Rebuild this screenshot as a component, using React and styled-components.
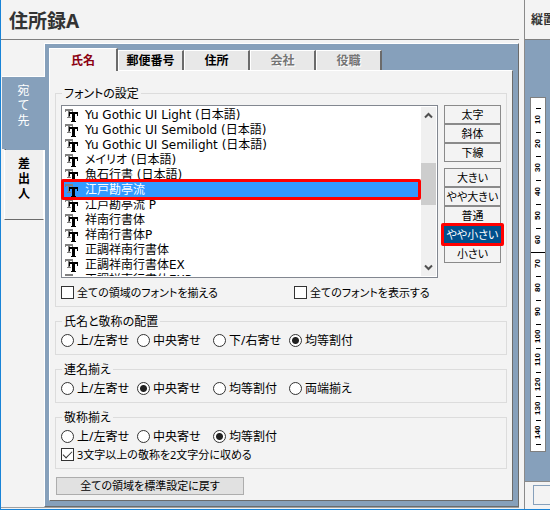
import { useState } from "react";
import styled, { createGlobalStyle, css } from "styled-components";

const FONTS = [
  "Yu Gothic UI Light (日本語)",
  "Yu Gothic UI Semibold (日本語)",
  "Yu Gothic UI Semilight (日本語)",
  "メイリオ (日本語)",
  "魚石行書 (日本語)",
  "江戸勘亭流",
  "江戸勘亭流 P",
  "祥南行書体",
  "祥南行書体P",
  "正調祥南行書体",
  "正調祥南行書体EX",
  "正調祥南行書体EXP",
];

const TABS = [
  { label: "氏名" },
  { label: "郵便番号" },
  { label: "住所" },
  { label: "会社", disabled: true },
  { label: "役職", disabled: true },
];

const STYLES = ["太字", "斜体", "下線"];
const SIZES = ["大きい", "やや大きい", "普通", "やや小さい", "小さい"];
const MARKS = [10, 20, 30, 40, 50, 60, 70, 80, 90, 100, 110, 120, 130, 140];

const TrueTypeIcon = () => (
  <svg width="13" height="13" viewBox="0 0 13 13" shapeRendering="crispEdges" aria-hidden="true">
    <path fill="#808080" d="M0 0h8v3h-1v-1h-2v6h1v1h-4v-1h1v-6h-2v1h-1z" />
    <path fill="#000" d="M4 3h9v4h-1v-2h-2v7h1v1h-5v-1h1v-7h-2v2h-1z" />
  </svg>
);

const RadioGroup = ({ legend, name, options, initial, children }) => {
  const [value, setValue] = useState(initial);
  return (
    <Group>
      <Legend>{legend}</Legend>
      <RadioRow>
        {options.map((option) => (
          <Label key={option}>
            <Radio name={name} checked={value === option} onChange={() => setValue(option)} />
            {option}
          </Label>
        ))}
      </RadioRow>
      {children}
    </Group>
  );
};

const Ruler = () => (
  <RulerBox>
    <Tick />
    {MARKS.map((mark) => (
      <Mark key={mark}>
        <MarkLabel>{mark}</MarkLabel>
        <Tick $fold={mark === 60} />
      </Mark>
    ))}
  </RulerBox>
);

const App = () => {
  const [tab, setTab] = useState("氏名");
  const [side, setSide] = useState("宛て先");
  const [font, setFont] = useState("江戸勘亭流");
  const [size, setSize] = useState("やや小さい");

  return (
    <Window>
      <GlobalStyle />
      <MainPane>
        <Header>
          <Title>住所録A</Title>
        </Header>
        <Body>
          <SideTabs role="tablist">
            {["宛て先", "差出人"].map((label) => (
              <SideTab key={label} role="tab" $active={side === label} aria-selected={side === label} onClick={() => setSide(label)}>
                <SideLabel>{label}</SideLabel>
              </SideTab>
            ))}
          </SideTabs>
          <Frame>
            <TabRow role="tablist">
              {TABS.map(({ label, disabled }) => (
                <Tab key={label} role="tab" disabled={disabled} $active={tab === label} aria-selected={tab === label} onClick={() => setTab(label)}>
                  {label}
                </Tab>
              ))}
            </TabRow>
            <Page>
              <Group>
                <Legend>フォントの設定</Legend>
                <FontRow>
                  <ListBox>
                    <List role="listbox" aria-label="フォントの設定">
                      {FONTS.map((name) => (
                        <Item key={name} role="option" aria-selected={font === name} $selected={font === name} onClick={() => setFont(name)}>
                          <TrueTypeIcon />
                          {name}
                        </Item>
                      ))}
                    </List>
                    <ScrollBar>
                      <ScrollButton aria-label="上へ">
                        <svg width="9" height="7" viewBox="0 0 9 7">
                          <path d="M1 5.5l3.500-3.500 3.500 3.500" fill="none" stroke="#505050" strokeWidth="2" />
                        </svg>
                      </ScrollButton>
                      <Thumb />
                      <ScrollButton aria-label="下へ">
                        <svg width="9" height="7" viewBox="0 0 9 7">
                          <path d="M1 1.500l3.500 3.500 3.500-3.500" fill="none" stroke="#505050" strokeWidth="2" />
                        </svg>
                      </ScrollButton>
                    </ScrollBar>
                    <ListCallout />
                  </ListBox>
                  <ButtonColumn>
                    <ButtonStack>
                      {STYLES.map((label) => (
                        <OptionButton key={label}>{label}</OptionButton>
                      ))}
                    </ButtonStack>
                    <ButtonStack>
                      {SIZES.map((label) => (
                        <OptionButton key={label} $active={size === label} onClick={() => setSize(label)}>
                          {label}
                          {size === label && <ButtonCallout />}
                        </OptionButton>
                      ))}
                    </ButtonStack>
                  </ButtonColumn>
                </FontRow>
                <CheckRow>
                  <CheckLabel>
                    <CheckBox />
                    全ての領域のフォントを揃える
                  </CheckLabel>
                  <CheckLabel>
                    <CheckBox />
                    全てのフォントを表示する
                  </CheckLabel>
                </CheckRow>
              </Group>
              <RadioGroup
                legend="氏名と敬称の配置"
                name="layout"
                options={["上/左寄せ", "中央寄せ", "下/右寄せ", "均等割付"]}
                initial="均等割付"
              />
              <RadioGroup
                legend="連名揃え"
                name="joint"
                options={["上/左寄せ", "中央寄せ", "均等割付", "両端揃え"]}
                initial="中央寄せ"
              />
              <RadioGroup
                legend="敬称揃え"
                name="honorific"
                options={["上/左寄せ", "中央寄せ", "均等割付"]}
                initial="均等割付"
              >
                <CheckLabel>
                  <CheckBox defaultChecked />
                  3文字以上の敬称を2文字分に収める
                </CheckLabel>
              </RadioGroup>
              <ResetButton>全ての領域を標準設定に戻す</ResetButton>
            </Page>
          </Frame>
        </Body>
      </MainPane>
      <PreviewPane>
        <Header>
          <PreviewTitle>縦置き</PreviewTitle>
        </Header>
        <Canvas>
          <Ruler />
        </Canvas>
        <PreviewFooter>
          <FooterButton aria-label="表示" />
        </PreviewFooter>
      </PreviewPane>
    </Window>
  );
};

export default App;

const GlobalStyle = createGlobalStyle`
  *, *::before, *::after {
    box-sizing: border-box;
  }
  body {
    margin: 0;
    background-color: #f3f3f3;
    color: #000;
    font: 12px/15px "Noto Sans", "Noto Sans CJK JP", sans-serif;
    font-feature-settings: "palt";
  }
  button, input {
    margin: 0;
    padding: 0;
    font: inherit;
    font-feature-settings: inherit;
    color: inherit;
  }
`

const Window = styled.div`
  display: flex;
  min-height: 100vh;
  border-left: 1px solid #1883d7;
  border-bottom: 1px solid #1883d7;
  overflow: hidden;
`
const MainPane = styled.main`
  flex: 1;
  min-width: 0;
  display: flex;
  flex-direction: column;
  padding-bottom: 1px;
`
const Header = styled.header`
  height: 40px;
  flex: none;
  display: flex;
  align-items: center;
  border-bottom: 1px solid #7f7f7f;
  color: #333;
  white-space: nowrap;
`
const Title = styled.h1`
  margin: 0;
  padding: 2px 0 0 8px;
  font-size: 19px;
  line-height: 24px;
  font-weight: bold;
`
const Body = styled.div`
  flex: 1;
  display: flex;
  padding-top: 3px;
  border-bottom: 1px solid #a0a0a0;
`
const SideTabs = styled.div`
  width: 43px;
  flex: none;
  display: flex;
  flex-direction: column;
  padding-top: 33px;
`
const SideTab = styled.button`
  width: 40px;
  height: 71px;
  margin-left: 3px;
  padding-top: 6px;
  display: flex;
  justify-content: center;
  align-items: flex-start;
  border: 1px solid;
  border-color: #6b6b6b #fff #6b6b6b #fff;
  background-color: #f0f0f0;
  font-weight: bold;
  ${({ $active }) => $active && css`
    width: 43px;
    height: 73px;
    margin-left: 1px;
    position: relative;
    border-width: 1px 0 0;
    border-color: #fff;
    background-color: #86a0bb;
    color: #fff;
    box-shadow: 4px 1px #86a0bb;
    font-weight: normal;
  `}
`
const SideLabel = styled.span`
  width: 12px;
  line-height: 15px;
  word-break: break-all;
  font-feature-settings: normal;
`
const Frame = styled.div`
  flex: 1;
  min-width: 0;
  display: flex;
  flex-direction: column;
  padding: 4px 5px 5px 4px;
  border: 1px solid;
  border-color: #fff #6b6b6b #6b6b6b #fff;
  background-color: #86a0bb;
`
const TabRow = styled.div`
  display: flex;
  align-items: flex-end;
  height: 23px;
`
const Tab = styled.button`
  width: 66px;
  height: 20px;
  margin-bottom: 1px;
  border: solid;
  border-width: 1px 2px 0 1px;
  border-color: #fff #6b6b6b #fff #fff;
  background-color: #e8e8e8;
  font-weight: bold;
  &:disabled {
    color: #757575;
    text-shadow: 1px 1px #fff;
  }
  ${({ $active }) => $active && css`
    width: 69px;
    height: 23px;
    margin-bottom: 0;
    position: relative;
    background-color: #f3f3f3;
    color: #8b0010;
  `}
`
const Page = styled.div`
  flex: 1;
  margin-top: -1px;
  padding: 14px 5px 5px;
  display: flex;
  flex-direction: column;
  align-items: stretch;
  gap: 6px;
  border: 1px solid;
  border-color: #fff #6b6b6b #6b6b6b #fff;
  background-color: #f3f3f3;
`
const Group = styled.fieldset`
  min-width: 0;
  margin: 0;
  padding: 4px 5px 6px;
  border: 1px solid #dcdcdc;
`
const Legend = styled.legend`
  height: 16px;
  margin-left: 1px;
  padding: 0 2px;
  line-height: 18px;
`
const FontRow = styled.div`
  display: flex;
  align-items: flex-start;
  gap: 6px;
`
const ListBox = styled.div`
  flex: 1;
  min-width: 0;
  height: 173px;
  position: relative;
  display: flex;
  padding: 1px;
  border: 1px solid #828790;
  background-color: #fff;
`
const List = styled.ul`
  flex: 1;
  min-width: 0;
  margin: 0;
  padding: 0;
  list-style: none;
  overflow: hidden;
  font-family: "DejaVu Sans", "Noto Sans CJK JP", sans-serif;
`
const Item = styled.li`
  height: 15px;
  display: flex;
  align-items: center;
  gap: 7px;
  padding: 2px 0 0 2px;
  white-space: nowrap;
  ${({ $selected }) => $selected && css`
    background-color: #3399ff;
    color: #fff;
  `}
`
const ScrollBar = styled.div`
  width: 15px;
  display: grid;
  grid-template-rows: 17px 39px 42px 1fr 17px;
  background-color: #f0f0f0;
`
const ScrollButton = styled.button`
  display: flex;
  align-items: center;
  justify-content: center;
  border: 0;
  background: none;
  &:last-child {
    grid-row: 5;
  }
`
const Thumb = styled.div`
  grid-row: 3;
  background-color: #cdcdcd;
`
const Callout = styled.span`
  position: absolute;
  border: 3px solid #f00;
  border-radius: 2px;
  pointer-events: none;
`
const ListCallout = styled(Callout)`
  top: 73px;
  left: -1px;
  right: 16px;
  height: 21px;
`
const ButtonCallout = styled(Callout)`
  inset: -3px -4px;
`
const ButtonColumn = styled.div`
  width: 57px;
  display: flex;
  flex-direction: column;
  gap: 6px;
`
const ButtonStack = styled.div`
  display: flex;
  flex-direction: column;
`
const OptionButton = styled.button`
  height: 19px;
  position: relative;
  border: 1px solid #8a8a8a;
  background-color: #f3f3f3;
  font-size: 11px;
  line-height: 17px;
  white-space: nowrap;
  ${({ $active }) => $active && css`
    z-index: 1;
    border-color: #00508c;
    background-color: #00508c;
    color: #fff;
  `}
`
const CheckRow = styled.div`
  display: grid;
  grid-template-columns: 233px 1fr;
  margin-top: 7px;
`
const RadioRow = styled.div`
  display: grid;
  grid-template-columns: repeat(4, 76px);
  & + label {
    margin-top: 3px;
  }
`
const Label = styled.label`
  height: 15px;
  display: flex;
  align-items: center;
  gap: 3px;
  white-space: nowrap;
`
const CheckLabel = styled(Label)`
  font-size: 11px;
`
const Radio = styled.input.attrs({ type: "radio" })`
  appearance: none;
  flex: none;
  width: 13px;
  height: 13px;
  border: 1px solid #333;
  border-radius: 50%;
  background-color: #fff;
  &:checked {
    background-image: radial-gradient(circle, #222 3px, transparent 4px);
  }
`
const CheckBox = styled.input.attrs({ type: "checkbox" })`
  appearance: none;
  flex: none;
  width: 13px;
  height: 13px;
  display: grid;
  place-items: center;
  border: 1px solid #333;
  background-color: #fff;
  &:checked::after {
    content: "";
    width: 9px;
    height: 5px;
    margin-bottom: 3px;
    border: solid #333;
    border-width: 0 0 1px 1px;
    transform: rotate(-45deg);
  }
`
const ResetButton = styled.button`
  align-self: flex-start;
  width: 188px;
  height: 18px;
  margin: 2px 0 0 1px;
  border: 1px solid #adadad;
  background-color: #e1e1e1;
  font-size: 11px;
  line-height: 16px;
`
const PreviewPane = styled.aside`
  width: 26px;
  margin-left: 5px;
  flex: none;
  display: flex;
  flex-direction: column;
  border-left: 1px solid #8a8a8a;
  overflow: hidden;
`
const PreviewTitle = styled.h2`
  margin: 0;
  padding-left: 6px;
  font-size: 12px;
  font-weight: bold;
`
const Canvas = styled.div`
  flex: 1;
  padding: 57px 4px 0 5px;
  background-color: #86a0bb;
`
const RulerBox = styled.div`
  width: 16px;
  height: 355px;
  padding-top: 4px;
  border: 1px solid #7f7f7f;
  background-color: #fff;
`
const Mark = styled.div`
  display: flex;
  flex-direction: column;
`
const Tick = styled.div`
  height: 12px;
  display: flex;
  align-items: center;
  justify-content: center;
  &::before {
    content: "";
    width: ${({ $fold }) => ($fold ? "100%" : "5px")};
    height: 1px;
    background-color: #000;
  }
`
const MarkLabel = styled.span`
  height: 12px;
  display: flex;
  align-items: center;
  justify-content: center;
  writing-mode: vertical-rl;
  transform: rotate(180deg);
  font-family: "Liberation Sans", sans-serif;
  font-size: 8px;
  font-weight: bold;
  line-height: 14px;
`
const PreviewFooter = styled.footer`
  height: 28px;
  flex: none;
  padding: 3px 0 0 8px;
  border-top: 1px solid #8a8a8a;
`
const FooterButton = styled.button`
  width: 40px;
  height: 20px;
  border: 1px solid #86a0bb;
  background-color: #f3f3f3;
`
